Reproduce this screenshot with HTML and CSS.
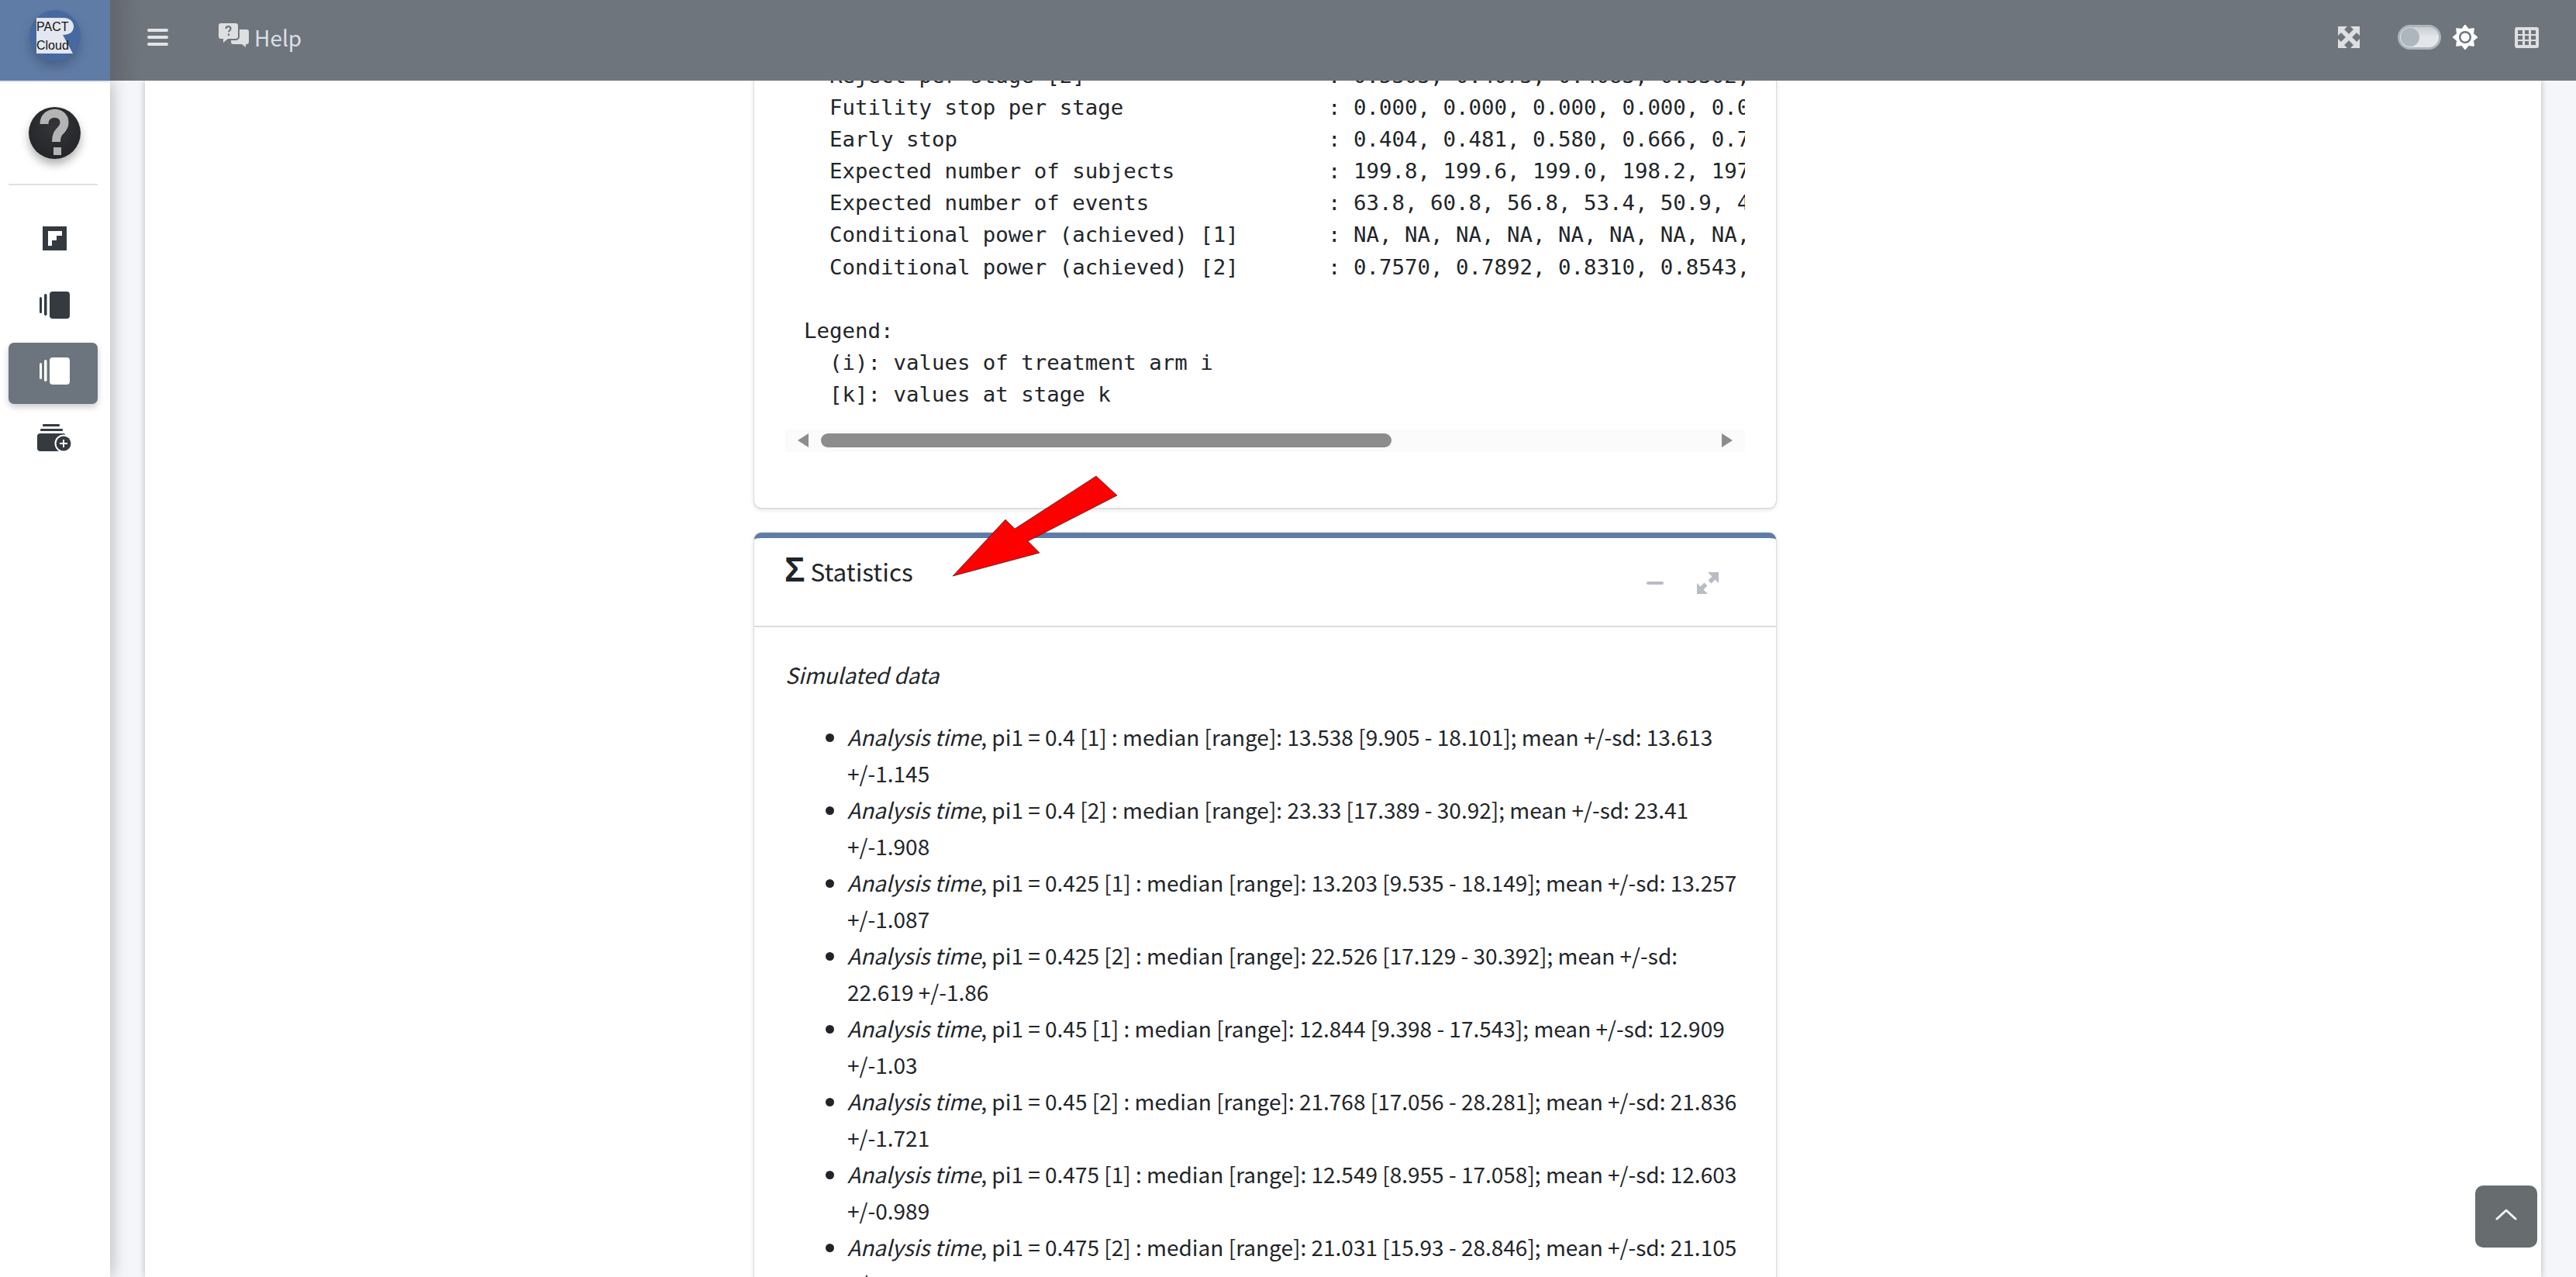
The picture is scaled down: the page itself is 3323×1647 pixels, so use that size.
FILE: index.html
```html
<!DOCTYPE html>
<html lang="en">
<head>
<meta charset="utf-8">
<title>PACT Cloud</title>
<link rel="stylesheet" href="styles.css">
</head>
<body>
<header class="topbar">
  <div class="brand">
    <div class="logo">
      <svg class="logo-shape" viewBox="0 0 48 46" aria-hidden="true"><path d="M0 0H35C43 0 48 5 48 11C48 18 43 22 34 22L47 46H0Z" fill="#e3e7ef"/></svg>
      <span class="logo-text">PACT<br>Cloud</span>
    </div>
  </div>
  <nav class="nav">
    <svg class="ico-bars" viewBox="0 0 27 22" aria-hidden="true"><rect width="27" height="4" y="0" rx="2"/><rect width="27" height="4" y="9" rx="2"/><rect width="27" height="4" y="18" rx="2"/></svg>
    <a class="help">
      <svg class="ico-help" viewBox="0 0 39 31" aria-hidden="true"><path d="M3 0h19a3 3 0 0 1 3 3v14a3 3 0 0 1-3 3H12l-6 5v-5H3a3 3 0 0 1-3-3V3a3 3 0 0 1 3-3z"/><path d="M27 8h9a3 3 0 0 1 3 3v13a3 3 0 0 1-3 3h-1v4l-5-4H19a3 3 0 0 1-3-3v-2h7a5 5 0 0 0 4-5z"/><path d="M9.500 7a3 3 0 0 1 6 .3c0 2-2.500 2-2.500 4M13 13.500v2.500" fill="none" stroke="#6f757d" stroke-width="2.200"/></svg>
      <span>Help</span>
    </a>
    <div class="nav-right">
      <svg class="ico-full" viewBox="0 0 28 28" aria-hidden="true"><path d="M0 0h12L0 12zM28 0v12L16 0zM0 28V16l12 12zM28 28H16l12-12z"/><path d="M3 3l22 22M25 3L3 25" stroke="#dedfe1" stroke-width="6" fill="none"/></svg>
      <div class="toggle"><span class="knob"></span></div>
      <svg class="ico-sun" viewBox="0 0 32 32" aria-hidden="true"><path d="M16 0L20.400 5.400 27.300 4.700 26.600 11.600 32 16 26.600 20.400 27.300 27.300 20.400 26.600 16 32 11.600 26.600 4.700 27.300 5.400 20.400 0 16 5.400 11.600 4.700 4.700 11.600 5.400Z" stroke="#fff" stroke-width="1"/><circle cx="16" cy="16" r="6.800" fill="none" stroke="#6f757d" stroke-width="2.500"/></svg>
      <svg class="ico-grid" viewBox="0 0 31 27" aria-hidden="true"><path fill-rule="evenodd" d="M3 0h25a3 3 0 0 1 3 3v21a3 3 0 0 1-3 3H3a3 3 0 0 1-3-3V3a3 3 0 0 1 3-3zM4 4v5h6V4zM13 4v5h5V4zM21 4v5h6V4zM4 11v5h6v-5zM13 11v5h5v-5zM21 11v5h6v-5zM4 18v5h6v-5zM13 18v5h5v-5zM21 18v5h6v-5z"/></svg>
    </div>
  </nav>
</header>
<div class="layout">
  <aside class="sidebar">
    <div class="avatar">
      <svg class="ico-q" viewBox="0 0 67 67" aria-hidden="true"><path d="M20 22C20 4 46 4 46 20C46 32 35.500 28 35.500 45" fill="none" stroke="#b4b4b4" stroke-width="11"/><rect x="32" y="52" width="10" height="10" fill="#b4b4b4"/></svg>
    </div>
    <div class="side-rule"></div>
    <ul class="side-menu">
      <li class="side-item">
        <svg class="ico-front" viewBox="0 0 31 31" aria-hidden="true"><path fill-rule="evenodd" d="M0 0h31v31H0zM7 6v19h5v-7h6v-6h7V6z"/></svg>
      </li>
      <li class="side-item">
        <svg class="ico-cards" viewBox="0 0 39 35" aria-hidden="true"><rect x="13" width="26" height="35" rx="4"/><rect y="7" width="3" height="21" rx="1.500"/><rect x="6" y="3" width="3.500" height="28" rx="1.700"/></svg>
      </li>
      <li class="side-item side-item-active">
        <svg class="ico-cards" viewBox="0 0 39 35" aria-hidden="true"><rect x="13" width="26" height="35" rx="4"/><rect y="7" width="3" height="21" rx="1.500"/><rect x="6" y="3" width="3.500" height="28" rx="1.700"/></svg>
      </li>
      <li class="side-item">
        <svg class="ico-add" viewBox="0 0 45 35" aria-hidden="true"><rect x="7" width="22" height="3" rx="1"/><rect x="4" y="6" width="29" height="3" rx="1"/><rect y="12" width="37" height="23" rx="4"/><circle cx="34" cy="25" r="11.500" fill="#fff"/><circle cx="34" cy="25" r="9.500"/><path d="M34 20v10M29 25h10" stroke="#fff" stroke-width="2" fill="none"/></svg>
      </li>
    </ul>
  </aside>
  <main class="main">
    <div class="content">
      <section class="card card-output">
        <div class="scroll-area">
<pre class="output">  Reject per stage [2]                   : 0.5303, 0.4073, 0.4083, 0.3302,
  Futility stop per stage                : 0.000, 0.000, 0.000, 0.000, 0.0
  Early stop                             : 0.404, 0.481, 0.580, 0.666, 0.7
  Expected number of subjects            : 199.8, 199.6, 199.0, 198.2, 197
  Expected number of events              : 63.8, 60.8, 56.8, 53.4, 50.9, 4
  Conditional power (achieved) [1]       : NA, NA, NA, NA, NA, NA, NA, NA,
  Conditional power (achieved) [2]       : 0.7570, 0.7892, 0.8310, 0.8543,

Legend:
  (i): values of treatment arm i
  [k]: values at stage k</pre>
        </div>
        <div class="hscroll">
          <span class="arrow-left"></span>
          <div class="track"><span class="thumb"></span></div>
          <span class="arrow-right"></span>
        </div>
      </section>
      <section class="card card-stats">
        <header class="card-head">
          <h3 class="card-title"><span class="sigma">&Sigma;</span> Statistics</h3>
          <div class="card-tools">
            <svg class="ico-minus" viewBox="0 0 22 4" aria-hidden="true"><rect width="22" height="4" rx="2"/></svg>
            <svg class="ico-expand" viewBox="0 0 28 28" aria-hidden="true"><path d="M14 0h14v14l-4.500-4.500-5 5-4-4 5-5zM0 28V14l4.500 4.500 5-5 4 4-5 5L14 28z"/></svg>
          </div>
        </header>
        <div class="card-body">
          <p class="lead"><em>Simulated data</em></p>
          <ul class="stats">
            <li><em>Analysis time</em>, pi1 = 0.4 [1] : median [range]: 13.538 [9.905 - 18.101]; mean +/-sd: 13.613 +/-1.145</li>
            <li><em>Analysis time</em>, pi1 = 0.4 [2] : median [range]: 23.33 [17.389 - 30.92]; mean +/-sd: 23.41 +/-1.908</li>
            <li><em>Analysis time</em>, pi1 = 0.425 [1] : median [range]: 13.203 [9.535 - 18.149]; mean +/-sd: 13.257 +/-1.087</li>
            <li><em>Analysis time</em>, pi1 = 0.425 [2] : median [range]: 22.526 [17.129 - 30.392]; mean +/-sd: 22.619 +/-1.86</li>
            <li><em>Analysis time</em>, pi1 = 0.45 [1] : median [range]: 12.844 [9.398 - 17.543]; mean +/-sd: 12.909 +/-1.03</li>
            <li><em>Analysis time</em>, pi1 = 0.45 [2] : median [range]: 21.768 [17.056 - 28.281]; mean +/-sd: 21.836 +/-1.721</li>
            <li><em>Analysis time</em>, pi1 = 0.475 [1] : median [range]: 12.549 [8.955 - 17.058]; mean +/-sd: 12.603 +/-0.989</li>
            <li><em>Analysis time</em>, pi1 = 0.475 [2] : median [range]: 21.031 [15.93 - 28.846]; mean +/-sd: 21.105 +/-1.6</li>
          </ul>
        </div>
      </section>
    </div>
  </main>
</div>
<svg class="red-arrow" viewBox="0 0 3323 1647" aria-hidden="true"><polygon points="1414,614 1441,639 1326,698 1341,713 1229,743 1297,670 1309,682" fill="#f00" stroke="#222" stroke-width="0.700"/></svg>
<button class="to-top" aria-label="Back to top">
  <svg viewBox="0 0 28 16" aria-hidden="true"><path d="M2 14 14 3l12 11" fill="none" stroke="#f4f4f4" stroke-width="3" stroke-linecap="round" stroke-linejoin="round"/></svg>
</button>
</body>
</html>
```
FILE: styles.css
```css
* { box-sizing: border-box; }
html, body { margin: 0; height: 100%; }
body {
  display: flex;
  flex-direction: column;
  height: 100vh;
  overflow: hidden;
  font-family: "Noto Sans CJK JP", "Noto Sans", sans-serif;
  font-size: 28px;
  line-height: 47px;
  color: #212529;
  background: #f4f6f9;
}
.topbar {
  display: flex;
  flex: none;
  height: 104px;
  position: relative;
  z-index: 3;
  background: #6f757d;
}
.brand {
  flex: none;
  width: 142px;
  height: 106px;
  display: flex;
  align-items: flex-start;
  justify-content: center;
  padding-top: 13px;
  background: #5f7ca7;
  border-bottom: 2px solid #dfe3e9;
}
.logo {
  position: relative;
  width: 66px;
  height: 66px;
  border-radius: 50%;
  background: #466a9f;
  box-shadow: 0 8px 14px rgba(0,0,0,.22);
  overflow: hidden;
}
.logo-shape { position: absolute; left: 9px; top: 10px; width: 48px; height: 46px; }
.logo-text {
  position: absolute;
  left: 9px;
  top: 10px;
  font: 16px/24px "Liberation Sans", sans-serif;
  color: #111;
}
.nav {
  flex: 1;
  display: flex;
  align-items: center;
  padding-left: 48px;
  background: linear-gradient(90deg, #62676e 0, #6f757d 40px);
}
.ico-bars { width: 27px; height: 22px; fill: #e3e4e6; margin-top: -8px; }
.help {
  display: flex;
  align-items: center;
  gap: 7px;
  margin-left: 65px;
  color: #dcdfe3;
  line-height: 40px;
  margin-top: -8px;
}
.ico-help { width: 39px; height: 31px; fill: #dedfe1; margin-top: -6px; }
.nav-right {
  margin-left: auto;
  margin-top: -8px;
  display: flex;
  align-items: center;
  padding-right: 48px;
}
.ico-full { width: 28px; height: 28px; fill: #dedfe1; }
.toggle {
  width: 56px;
  height: 32px;
  margin-left: 49px;
  border-radius: 16px;
  border: 3px solid #adb5bd;
  background: linear-gradient(180deg, #c9cdd2, #e3e6ea 50%);
  padding: 1px;
}
.knob { display: block; width: 24px; height: 24px; border-radius: 50%; background: #adb5bd; }
.ico-sun { width: 32px; height: 32px; fill: #fff; margin-left: 15px; overflow: visible; }
.ico-grid { width: 31px; height: 27px; fill: #dedfe1; margin-left: 48px; }

.layout { flex: 1; min-height: 0; display: flex; }
.sidebar {
  flex: none;
  width: 142px;
  background: #fff;
  padding: 34px 16px 0 11px;
  position: relative;
  z-index: 2;
  box-shadow: 0 0 22px rgba(0,0,0,.3);
}
.avatar {
  width: 67px;
  height: 67px;
  margin-left: 26px;
  border-radius: 50%;
  background: radial-gradient(circle at 50% 40%, #35363a, #1f2023);
  box-shadow: 0 7px 12px rgba(0,0,0,.3);
}
.ico-q { display: block; width: 67px; height: 67px; }
.side-rule { height: 2px; margin-top: 32px; background: #dee2e6; }
.side-menu {
  list-style: none;
  margin: 32px 0 0;
  padding: 0;
  display: flex;
  flex-direction: column;
  gap: 6.670px;
}
.side-item {
  height: 79px;
  padding: 0 0 6px 4px;
  display: flex;
  align-items: center;
  justify-content: center;
  border-radius: 7px;
  fill: #343a40;
}
.side-item-active { background: #6c757d; fill: #fff; box-shadow: 0 4px 8px rgba(0,0,0,.2); }
.ico-front { width: 31px; height: 31px; }
.ico-cards { width: 39px; height: 35px; }
.ico-add { width: 45px; height: 35px; }

.main { flex: 1; min-width: 0; padding: 0 45px; overflow: hidden; }
.content {
  height: 100%;
  background: #fff;
  padding: 0 0 0 786px;
  overflow: hidden;
  box-shadow: 0 0 8px rgba(0,0,0,.25);
}
.card {
  width: 1318px;
  border-radius: 9px;
  background: #fff;
  box-shadow: 0 0 2px rgba(0,0,0,.3), 0 2px 6px rgba(0,0,0,.14);
}
.card-output { margin-top: -27px; height: 578px; padding: 0 40px; }
.scroll-area { overflow: hidden; height: 476px; }
.output {
  margin: 0;
  font: 27.400px/41.100px "DejaVu Sans Mono", monospace;
  color: #212529;
  white-space: pre;
  padding: 0 0 0 24px;
}
.hscroll {
  display: flex;
  align-items: center;
  height: 30px;
  background: #fbfbfb;
}
.arrow-left, .arrow-right { width: 0; height: 0; border-style: solid; border-color: transparent #8c8c8c; flex: none; }
.arrow-left { margin-left: 16px; border-width: 9px 14px 9px 0; }
.arrow-right { margin-right: 16px; border-width: 9px 0 9px 14px; }
.track { flex: 1; margin: 0 16px; height: 18px; }
.thumb { display: block; width: 736px; height: 18px; border-radius: 9px; background: #8c8c8c; }

.card-stats { margin-top: 32px; border-top: 7px solid #5f7ca7; }
.card-head {
  display: flex;
  align-items: flex-start;
  justify-content: space-between;
  height: 115px;
  padding: 17px 74px 0 39px;
  border-bottom: 2px solid #dcdcdc;
}
.card-title { margin: 0; font-size: 31.500px; font-weight: 400; line-height: 48px; }
.sigma { font: 700 44px/48px "Liberation Sans", sans-serif; }
.card-tools { display: flex; align-items: center; gap: 43px; margin-top: 27px; fill: #b8bcc3; }
.ico-minus { width: 22px; height: 4px; }
.ico-expand { width: 28px; height: 28px; }
.card-body { padding: 38px 40px 0; }
.lead { margin: 0 0 33px; }
.stats { margin: 0; padding: 0 8px 0 80px; }

.red-arrow { position: fixed; left: 0; top: 0; width: 3323px; height: 1647px; z-index: 4; pointer-events: none; }
.to-top {
  position: fixed;
  left: 3193px;
  top: 1529px;
  width: 80px;
  height: 80px;
  padding: 0;
  border: 0;
  border-radius: 10px;
  background: #676d6f;
  z-index: 5;
  display: flex;
  align-items: center;
  justify-content: center;
}
.to-top svg { width: 28px; height: 16px; margin-top: -6px; }
```
